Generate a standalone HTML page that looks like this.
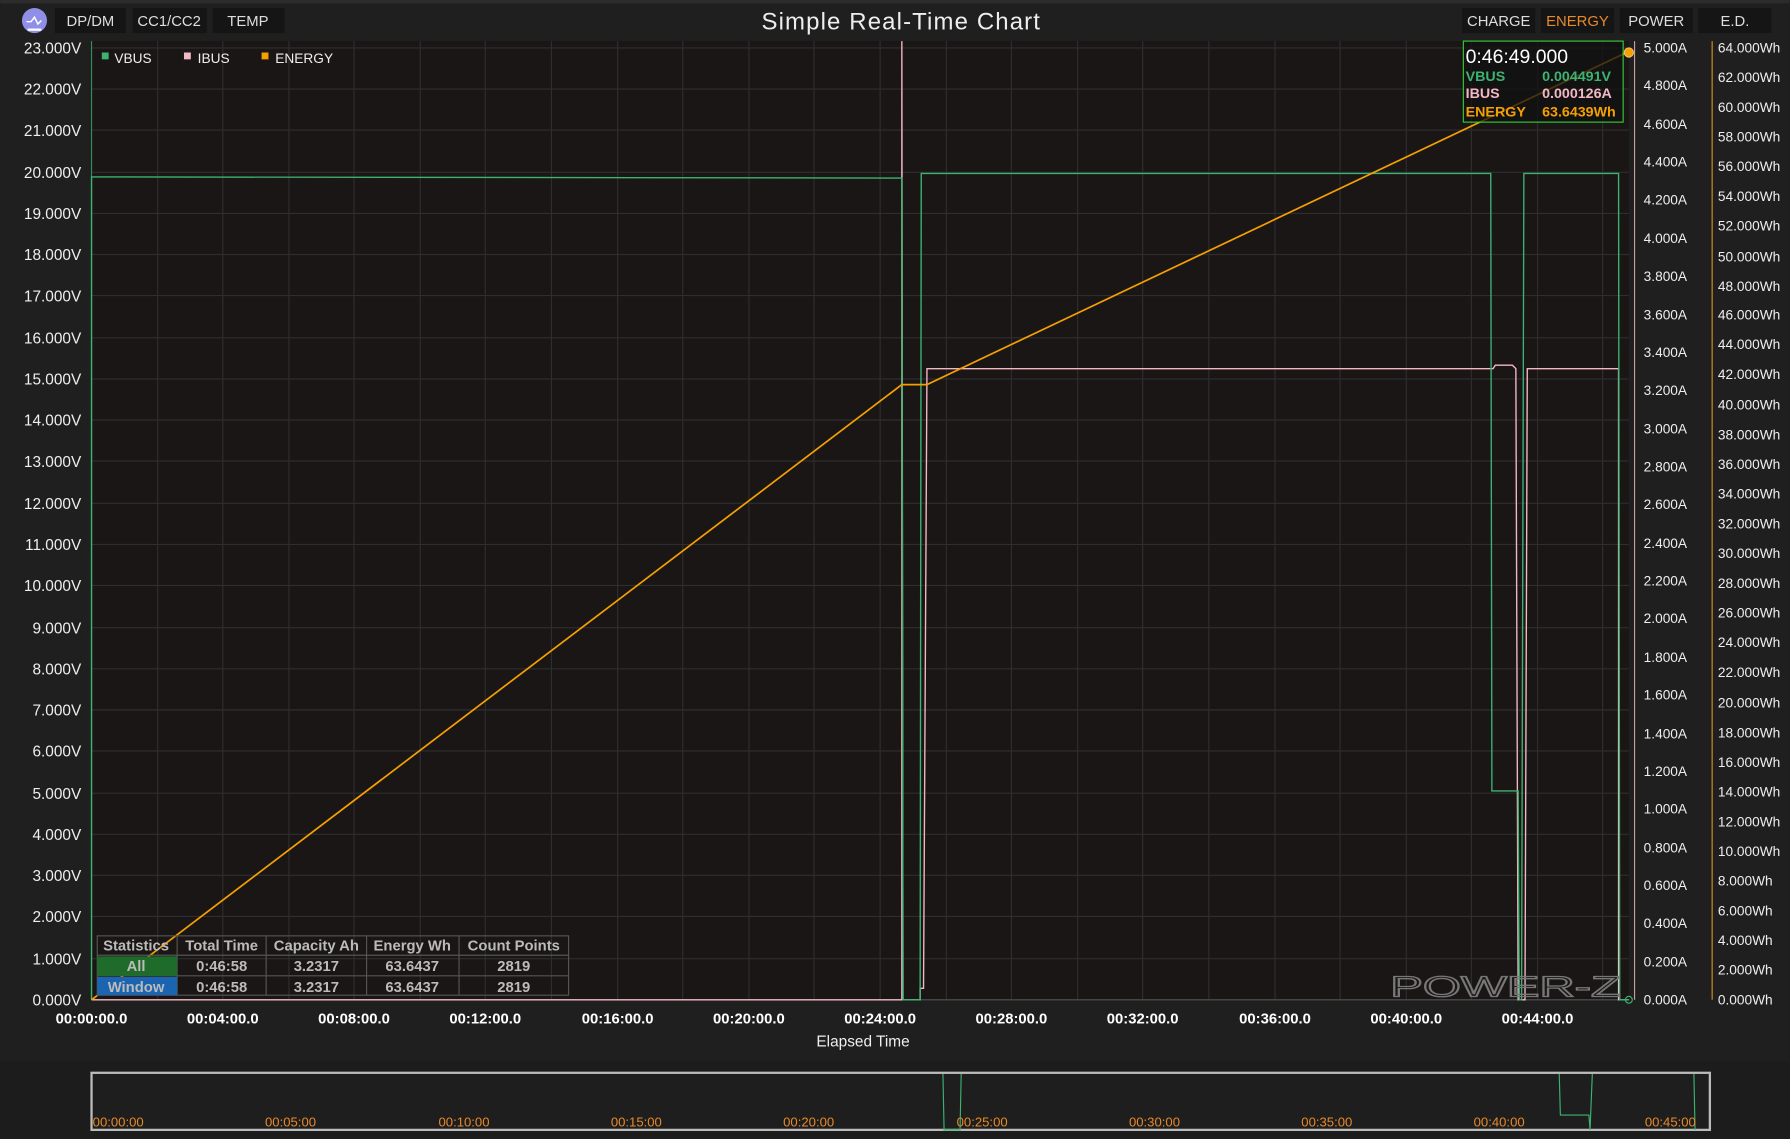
<!DOCTYPE html>
<html><head><meta charset="utf-8"><style>
html,body{margin:0;padding:0;background:#1e1e1e;width:1790px;height:1139px;overflow:hidden}
svg{display:block}
text{font-family:"Liberation Sans",sans-serif}
</style></head><body>
<svg width="1790" height="1139" viewBox="0 0 1568 998" xmlns="http://www.w3.org/2000/svg">
<rect x="0" y="0" width="1568" height="998" fill="#1f1f1f"/>
<rect x="0" y="0" width="1568" height="3" fill="#2c2c2c"/>
<circle cx="30" cy="18" r="11" fill="#8f8fe8"/>
<path d="M23 19 L27 19 L30 15 L33 21 L36 18" stroke="#fff" stroke-width="1.3" fill="none"/>
<rect x="24" y="25" width="12" height="2" fill="#fff"/>
<g font-size="13" fill="#ddd" text-anchor="middle">
<rect x="48" y="7" width="62" height="22" fill="#151515"/><text x="79" y="23">DP/DM</text>
<rect x="116" y="7" width="65" height="22" fill="#151515"/><text x="148" y="23">CC1/CC2</text>
<rect x="186" y="7" width="63" height="22" fill="#151515"/><text x="217" y="23">TEMP</text>
<rect x="1281" y="7" width="64" height="22" fill="#151515"/><text x="1313" y="23">CHARGE</text>
<rect x="1350" y="7" width="64" height="22" fill="#151515"/><text x="1382" y="23" fill="#e8892a">ENERGY</text>
<rect x="1419" y="7" width="64" height="22" fill="#151515"/><text x="1451" y="23">POWER</text>
<rect x="1488" y="7" width="64" height="22" fill="#151515"/><text x="1520" y="23">E.D.</text>
</g>
<text x="789" y="26" font-size="21" fill="#eee" text-anchor="middle" textLength="244">Simple Real-Time Chart</text>
<rect x="80" y="36" width="1347" height="840" fill="#1a1616"/>
<g stroke="#2e2e2e" stroke-width="1">
<line x1="80" y1="42" x2="1427" y2="42"/><line x1="80" y1="78" x2="1427" y2="78"/><line x1="80" y1="114" x2="1427" y2="114"/><line x1="80" y1="151" x2="1427" y2="151"/><line x1="80" y1="187" x2="1427" y2="187"/><line x1="80" y1="223" x2="1427" y2="223"/><line x1="80" y1="259" x2="1427" y2="259"/><line x1="80" y1="296" x2="1427" y2="296"/><line x1="80" y1="332" x2="1427" y2="332"/><line x1="80" y1="368" x2="1427" y2="368"/><line x1="80" y1="404" x2="1427" y2="404"/><line x1="80" y1="441" x2="1427" y2="441"/><line x1="80" y1="477" x2="1427" y2="477"/><line x1="80" y1="513" x2="1427" y2="513"/><line x1="80" y1="550" x2="1427" y2="550"/><line x1="80" y1="586" x2="1427" y2="586"/><line x1="80" y1="622" x2="1427" y2="622"/><line x1="80" y1="658" x2="1427" y2="658"/><line x1="80" y1="695" x2="1427" y2="695"/><line x1="80" y1="731" x2="1427" y2="731"/><line x1="80" y1="767" x2="1427" y2="767"/><line x1="80" y1="803" x2="1427" y2="803"/><line x1="80" y1="840" x2="1427" y2="840"/>
<line x1="138" y1="36" x2="138" y2="876"/><line x1="195" y1="36" x2="195" y2="876"/><line x1="253" y1="36" x2="253" y2="876"/><line x1="310" y1="36" x2="310" y2="876"/><line x1="368" y1="36" x2="368" y2="876"/><line x1="425" y1="36" x2="425" y2="876"/><line x1="483" y1="36" x2="483" y2="876"/><line x1="541" y1="36" x2="541" y2="876"/><line x1="598" y1="36" x2="598" y2="876"/><line x1="656" y1="36" x2="656" y2="876"/><line x1="713" y1="36" x2="713" y2="876"/><line x1="771" y1="36" x2="771" y2="876"/><line x1="829" y1="36" x2="829" y2="876"/><line x1="886" y1="36" x2="886" y2="876"/><line x1="944" y1="36" x2="944" y2="876"/><line x1="1001" y1="36" x2="1001" y2="876"/><line x1="1059" y1="36" x2="1059" y2="876"/><line x1="1117" y1="36" x2="1117" y2="876"/><line x1="1174" y1="36" x2="1174" y2="876"/><line x1="1232" y1="36" x2="1232" y2="876"/><line x1="1289" y1="36" x2="1289" y2="876"/><line x1="1347" y1="36" x2="1347" y2="876"/><line x1="1404" y1="36" x2="1404" y2="876"/>
</g>
<line x1="80" y1="876" x2="1427" y2="876" stroke="#555" />
<line x1="80" y1="36" x2="80" y2="876" stroke="#3a8a5a"/>
<g font-size="13.5" fill="#eee" text-anchor="end">
<text x="71" y="47">23.000V</text><text x="71" y="83">22.000V</text><text x="71" y="119">21.000V</text><text x="71" y="156">20.000V</text><text x="71" y="192">19.000V</text><text x="71" y="228">18.000V</text><text x="71" y="264">17.000V</text><text x="71" y="301">16.000V</text><text x="71" y="337">15.000V</text><text x="71" y="373">14.000V</text><text x="71" y="409">13.000V</text><text x="71" y="446">12.000V</text><text x="71" y="482">11.000V</text><text x="71" y="518">10.000V</text><text x="71" y="555">9.000V</text><text x="71" y="591">8.000V</text><text x="71" y="627">7.000V</text><text x="71" y="663">6.000V</text><text x="71" y="700">5.000V</text><text x="71" y="736">4.000V</text><text x="71" y="772">3.000V</text><text x="71" y="808">2.000V</text><text x="71" y="845">1.000V</text><text x="71" y="881">0.000V</text>
</g>
<line x1="1432" y1="36" x2="1432" y2="876" stroke="#c9a0a0"/>
<g font-size="12" fill="#eee">
<text x="1440" y="46">5.000A</text><text x="1440" y="79">4.800A</text><text x="1440" y="113">4.600A</text><text x="1440" y="146">4.400A</text><text x="1440" y="179">4.200A</text><text x="1440" y="213">4.000A</text><text x="1440" y="246">3.800A</text><text x="1440" y="280">3.600A</text><text x="1440" y="313">3.400A</text><text x="1440" y="346">3.200A</text><text x="1440" y="380">3.000A</text><text x="1440" y="413">2.800A</text><text x="1440" y="446">2.600A</text><text x="1440" y="480">2.400A</text><text x="1440" y="513">2.200A</text><text x="1440" y="546">2.000A</text><text x="1440" y="580">1.800A</text><text x="1440" y="613">1.600A</text><text x="1440" y="647">1.400A</text><text x="1440" y="680">1.200A</text><text x="1440" y="713">1.000A</text><text x="1440" y="747">0.800A</text><text x="1440" y="780">0.600A</text><text x="1440" y="813">0.400A</text><text x="1440" y="847">0.200A</text><text x="1440" y="880">0.000A</text>
</g>
<line x1="1500" y1="36" x2="1500" y2="876" stroke="#d4901e"/>
<g font-size="12" fill="#eee">
<text x="1505" y="46">64.000Wh</text><text x="1505" y="72">62.000Wh</text><text x="1505" y="98">60.000Wh</text><text x="1505" y="124">58.000Wh</text><text x="1505" y="150">56.000Wh</text><text x="1505" y="176">54.000Wh</text><text x="1505" y="202">52.000Wh</text><text x="1505" y="229">50.000Wh</text><text x="1505" y="255">48.000Wh</text><text x="1505" y="280">46.000Wh</text><text x="1505" y="306">44.000Wh</text><text x="1505" y="332">42.000Wh</text><text x="1505" y="359">40.000Wh</text><text x="1505" y="385">38.000Wh</text><text x="1505" y="411">36.000Wh</text><text x="1505" y="437">34.000Wh</text><text x="1505" y="463">32.000Wh</text><text x="1505" y="489">30.000Wh</text><text x="1505" y="515">28.000Wh</text><text x="1505" y="541">26.000Wh</text><text x="1505" y="567">24.000Wh</text><text x="1505" y="593">22.000Wh</text><text x="1505" y="620">20.000Wh</text><text x="1505" y="646">18.000Wh</text><text x="1505" y="672">16.000Wh</text><text x="1505" y="698">14.000Wh</text><text x="1505" y="724">12.000Wh</text><text x="1505" y="750">10.000Wh</text><text x="1505" y="776">8.000Wh</text><text x="1505" y="802">6.000Wh</text><text x="1505" y="828">4.000Wh</text><text x="1505" y="854">2.000Wh</text><text x="1505" y="880">0.000Wh</text>
</g>
<g font-size="13" fill="#fff" font-weight="bold" text-anchor="middle">
<text x="80" y="897">00:00:00.0</text><text x="195" y="897">00:04:00.0</text><text x="310" y="897">00:08:00.0</text><text x="425" y="897">00:12:00.0</text><text x="541" y="897">00:16:00.0</text><text x="656" y="897">00:20:00.0</text><text x="771" y="897">00:24:00.0</text><text x="886" y="897">00:28:00.0</text><text x="1001" y="897">00:32:00.0</text><text x="1117" y="897">00:36:00.0</text><text x="1232" y="897">00:40:00.0</text><text x="1347" y="897">00:44:00.0</text>
</g>
<text x="756" y="917" font-size="13.5" fill="#eee" text-anchor="middle">Elapsed Time</text>
<g font-size="12" fill="#eee">
<rect x="89" y="46" width="6" height="6" fill="#3cb371"/><text x="100" y="55">VBUS</text>
<rect x="161" y="46" width="6" height="6" fill="#f4b8c4"/><text x="173" y="55">IBUS</text>
<rect x="229" y="46" width="6" height="6" fill="#f5a000"/><text x="241" y="55">ENERGY</text>
</g>
<polyline fill="none" stroke="#f4b8c4" stroke-width="1.2" points="80,876 790,876 790,36 791,876 806,876 806,866 809,866 812,323 1308,323 1310,320 1325,320 1328,323 1330,876 1336,876 1338,323 1418,323 1418,876 1427,876"/>
<polyline fill="none" stroke="#3cb371" stroke-width="1.2" points="80,876 80,155 790,156 791,876 806,876 807,152 1306,152 1307,693 1330,693 1331,876 1333,876 1335,152 1418,152 1419,876 1427,876"/>
<polyline fill="none" stroke="#f5a000" stroke-width="1.5" points="80,876 790,337 812,337 1427,45"/>
<circle cx="1427" cy="46" r="4" fill="#f5a000" stroke="#f5c060"/>
<circle cx="1427" cy="876" r="3" fill="none" stroke="#3cb371"/>
<rect x="1282" y="36" width="140" height="71" fill="#111" fill-opacity="0.75" stroke="#3c3" />
<text x="1284" y="55" font-size="17" fill="#fff">0:46:49.000</text>
<g font-size="12.5" font-weight="bold">
<text x="1284" y="71" fill="#3cb371">VBUS</text><text x="1351" y="71" fill="#3cb371">0.004491V</text>
<text x="1284" y="86" fill="#f4b8c4">IBUS</text><text x="1351" y="86" fill="#f4b8c4">0.000126A</text>
<text x="1284" y="102" fill="#f5a000">ENERGY</text><text x="1351" y="102" fill="#f5a000">63.6439Wh</text>
</g>
<g stroke="#555" fill="none">
<rect x="85" y="820" width="413" height="52"/>
<line x1="85" y1="837" x2="498" y2="837"/><line x1="85" y1="855" x2="498" y2="855"/>
<line x1="155" y1="820" x2="155" y2="872"/><line x1="233" y1="820" x2="233" y2="872"/><line x1="321" y1="820" x2="321" y2="872"/><line x1="402" y1="820" x2="402" y2="872"/>
</g>
<rect x="85" y="838" width="70" height="17" fill="#1e6b2a"/>
<rect x="85" y="856" width="70" height="16" fill="#1a64b0"/>
<g font-size="13" font-weight="bold" fill="#bbb" text-anchor="middle">
<text x="119" y="833">Statistics</text><text x="194" y="833">Total Time</text><text x="277" y="833">Capacity Ah</text><text x="361" y="833">Energy Wh</text><text x="450" y="833">Count Points</text>
<text x="119" y="851">All</text><text x="194" y="851">0:46:58</text><text x="277" y="851">3.2317</text><text x="361" y="851">63.6437</text><text x="450" y="851">2819</text>
<text x="119" y="869">Window</text><text x="194" y="869">0:46:58</text><text x="277" y="869">3.2317</text><text x="361" y="869">63.6437</text><text x="450" y="869">2819</text>
</g>
<text x="1218" y="873" font-size="25" fill="none" stroke="#777" stroke-width="1.2" textLength="202" lengthAdjust="spacingAndGlyphs">POWER-Z</text>
<rect x="0" y="930" width="1568" height="68" fill="#1c1c1c"/>
<rect x="80" y="940" width="1418" height="50" fill="#1e1e1e" stroke="#bbb" stroke-width="2"/>
<polyline fill="none" stroke="#3cb371" points="826,941 827,990 841,990 842,941"/>
<polyline fill="none" stroke="#3cb371" points="1366,941 1367,977 1392,977 1393,990 1395,941"/>
<polyline fill="none" stroke="#3cb371" points="1484,941 1485,990"/>
<g font-size="11.5" fill="#e8892a">
<text x="81" y="987">00:00:00</text><text x="232" y="987">00:05:00</text><text x="384" y="987">00:10:00</text><text x="535" y="987">00:15:00</text><text x="686" y="987">00:20:00</text><text x="838" y="987">00:25:00</text><text x="989" y="987">00:30:00</text><text x="1140" y="987">00:35:00</text><text x="1291" y="987">00:40:00</text><text x="1441" y="987">00:45:00</text>
</g>
</svg>
</body></html>
